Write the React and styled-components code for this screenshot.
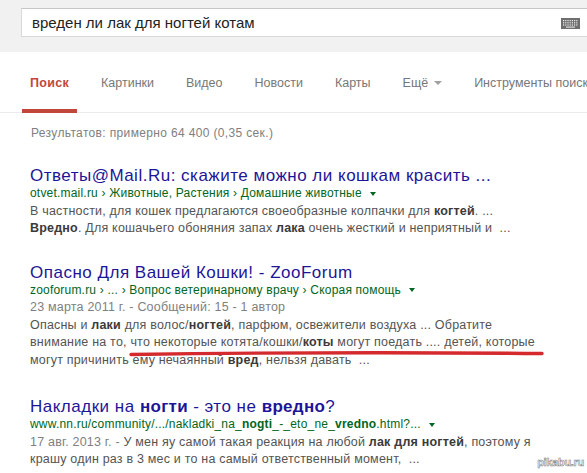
import React from "react";
import styled, { createGlobalStyle } from "styled-components";

const Global = createGlobalStyle`
  html, body { margin: 0; padding: 0; background: #fff; }
  body { font-family: "Liberation Sans", Arial, sans-serif; width: 587px; height: 473px; overflow: hidden; }
`;

const Page = styled.div`
  position: relative;
  width: 587px;
  height: 473px;
  overflow: hidden;
  background: #fff;
`;

const Header = styled.header`
  height: 52px;
  background: #f1f1f1;
  padding: 8px 0 0 21px;
  box-sizing: border-box;
  overflow: hidden;
`;

const SearchBox = styled.div`
  width: 620px;
  height: 29px;
  box-sizing: border-box;
  background: #fff;
  border: 1px solid #d9d9d9;
  border-top-color: #c6c6c6;
  display: flex;
  align-items: center;
  padding-left: 10px;
  position: relative;
`;

const Query = styled.span`
  font-size: 15px;
  color: #222;
`;

const Keyboard = styled.svg`
  position: absolute;
  left: 539px;
  top: 9px;
`;

const Nav = styled.nav`
  height: 61px;
  border-bottom: 1px solid #ebebeb;
  display: flex;
  align-items: stretch;
  padding-left: 22px;
  gap: 16px;
  box-sizing: border-box;
  white-space: nowrap;
`;

const Tab = styled.div`
  padding: 4px 8px 0;
  display: flex;
  align-items: center;
  font-size: 12.5px;
  color: ${(p) => (p.$active ? "#c1473a" : "#777")};
  font-weight: ${(p) => (p.$active ? "bold" : "normal")};
  letter-spacing: ${(p) => (p.$active ? "0.3px" : "0")};
  border-bottom: 4px solid ${(p) => (p.$active ? "#c1473a" : "transparent")};
  margin-bottom: -1px;
`;

const Caret = styled.span`
  display: inline-block;
  width: 0;
  height: 0;
  border-left: 4px solid transparent;
  border-right: 4px solid transparent;
  border-top: 4px solid #a0a0a0;
  margin-left: 6px;
  vertical-align: middle;
`;

const Content = styled.main`
  padding: 13px 0 0 30px;
`;

const Stats = styled.div`
  font-size: 12px;
  line-height: 14px;
  color: #808080;
  margin-left: 1px;
  letter-spacing: 0.35px;
`;

const Result = styled.div`
  margin-top: ${(p) => p.$mt}px;
`;

const Title = styled.div`
  font-size: 17px;
  letter-spacing: 0.5px;
  color: #1d1597;
  line-height: 18px;
  white-space: nowrap;
  b { font-weight: bold; letter-spacing: 0.3px; }
`;

const Url = styled.div`
  font-size: 12px;
  letter-spacing: 0.2px;
  color: #006621;
  line-height: 17.5px;
  white-space: nowrap;
  b { font-weight: bold; }
`;

const UrlCaret = styled.span`
  display: inline-block;
  width: 0;
  height: 0;
  border-left: 3.5px solid transparent;
  border-right: 3.5px solid transparent;
  border-top: 4px solid #006621;
  margin-left: 8px;
  vertical-align: middle;
`;

const Snippet = styled.div`
  font-size: 12.5px;
  letter-spacing: 0.2px;
  color: #545454;
  line-height: 17.5px;
  white-space: nowrap;
  b { color: #3a3a3a; }
`;

const Date = styled.span`
  color: #808080;
`;

const Marker = styled.svg`
  position: absolute;
  left: 128px;
  top: 346px;
`;

const Watermark = styled.div`
  position: absolute;
  right: 3px;
  bottom: 5px;
  font-size: 11px;
  font-weight: bold;
  color: #fff;
  -webkit-text-stroke: 0.6px #888;
  letter-spacing: -0.3px;
`;

export default function App() {
  return (
    <Page>
      <Global />
      <Header>
        <SearchBox>
          <Query>вреден ли лак для ногтей котам</Query>
          <Keyboard width="19" height="11" viewBox="0 0 19 11">
            <rect x="0" y="0" width="19" height="11" fill="#6e6e6e" />
            {[0, 1, 2].map((r) =>
              [0, 1, 2, 3, 4, 5, 6].map((c) => (
                <rect key={r + "-" + c} x={2 + c * 2.2} y={2 + r * 2.2} width="1.2" height="1.2" fill="#eee" />
              ))
            )}
            <rect x="5" y="8.6" width="9" height="1" fill="#eee" />
          </Keyboard>
        </SearchBox>
      </Header>
      <Nav>
        <Tab $active>Поиск</Tab>
        <Tab>Картинки</Tab>
        <Tab>Видео</Tab>
        <Tab>Новости</Tab>
        <Tab>Карты</Tab>
        <Tab>Ещё<Caret /></Tab>
        <Tab>Инструменты поиска</Tab>
      </Nav>
      <Content>
        <Stats>Результатов: примерно 64 400 (0,35 сек.)</Stats>
        <Result $mt={27}>
          <Title>Ответы@Mail.Ru: скажите можно ли кошкам красить ...</Title>
          <Url>otvet.mail.ru › Животные, Растения › Домашние животные<UrlCaret /></Url>
          <Snippet>В частности, для кошек предлагаются своеобразные колпачки для <b>когтей</b>. ...</Snippet>
          <Snippet><b>Вредно</b>. Для кошачьего обоняния запах <b>лака</b> очень жесткий и неприятный и &nbsp;...</Snippet>
        </Result>
        <Result $mt={26}>
          <Title>Опасно Для Вашей Кошки! - ZooForum</Title>
          <Url>zooforum.ru › ... › Вопрос ветеринарному врачу › Скорая помощь<UrlCaret /></Url>
          <Snippet><Date>23 марта 2011 г. - Сообщений: 15 - 1 автор</Date></Snippet>
          <Snippet>Опасны и <b>лаки</b> для волос/<b>ногтей</b>, парфюм, освежители воздуха ... Обратите</Snippet>
          <Snippet>внимание на то, что некоторые котята/кошки/<b>коты</b> могут поедать .... детей, которые</Snippet>
          <Snippet>могут причинить ему нечаянный <b>вред</b>, нельзя давать &nbsp;...</Snippet>
        </Result>
        <Result $mt={29}>
          <Title>Накладки на <b>ногти</b> - это не <b>вредно</b>?</Title>
          <Url>www.nn.ru/community/.../nakladki_na_<b>nogti</b>_-_eto_ne_<b>vredno</b>.html?...<UrlCaret /></Url>
          <Snippet><Date>17 авг. 2013 г. - </Date>У мен яу самой такая реакция на любой <b>лак для ногтей</b>, поэтому я</Snippet>
          <Snippet>крашу один раз в 3 мес и то на самый ответственный момент, &nbsp;...</Snippet>
        </Result>
      </Content>
      <Marker width="420" height="14" viewBox="0 0 420 14">
        <path d="M3 8.5 Q 208 5.5 414 7.5" stroke="#d42a2e" strokeWidth="3.4" strokeLinecap="round" fill="none" />
      </Marker>
      <Watermark>pikabu.ru</Watermark>
    </Page>
  );
}
